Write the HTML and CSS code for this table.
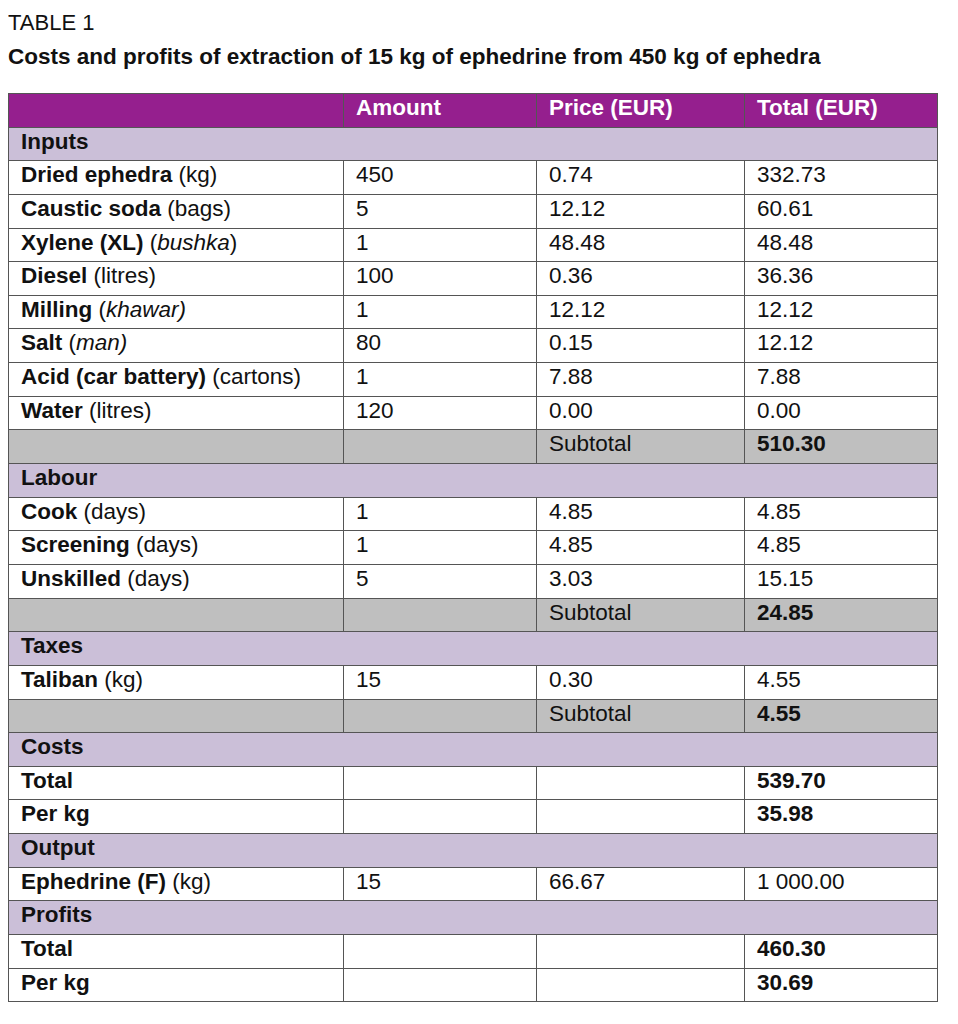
FILE: index.html
```html
<!DOCTYPE html>
<html lang="en">
<head>
<meta charset="utf-8">
<title>Table 1</title>
<link rel="stylesheet" href="styles.css">
</head>
<body>
<p class="label">TABLE 1</p>
<h1 class="title">Costs and profits of extraction of 15 kg of ephedrine from 450 kg of ephedra</h1>
<table class="data">
  <colgroup>
    <col class="c1"><col class="c2"><col class="c3"><col class="c4">
  </colgroup>
  <thead>
    <tr class="head"><th></th><th>Amount</th><th>Price (EUR)</th><th>Total (EUR)</th></tr>
  </thead>
  <tbody>
    <tr class="section"><td colspan="4">Inputs</td></tr>
    <tr><td><b>Dried ephedra</b> (kg)</td><td>450</td><td>0.74</td><td>332.73</td></tr>
    <tr><td><b>Caustic soda</b> (bags)</td><td>5</td><td>12.12</td><td>60.61</td></tr>
    <tr><td><b>Xylene (XL)</b> (<i>bushka</i>)</td><td>1</td><td>48.48</td><td>48.48</td></tr>
    <tr><td><b>Diesel</b> (litres)</td><td>100</td><td>0.36</td><td>36.36</td></tr>
    <tr><td><b>Milling</b> (<i>khawar)</i></td><td>1</td><td>12.12</td><td>12.12</td></tr>
    <tr><td><b>Salt</b> (<i>man)</i></td><td>80</td><td>0.15</td><td>12.12</td></tr>
    <tr><td><b>Acid (car battery)</b> (cartons)</td><td>1</td><td>7.88</td><td>7.88</td></tr>
    <tr><td><b>Water</b> (litres)</td><td>120</td><td>0.00</td><td>0.00</td></tr>
    <tr class="sub"><td></td><td></td><td>Subtotal</td><td><b>510.30</b></td></tr>
    <tr class="section"><td colspan="4">Labour</td></tr>
    <tr><td><b>Cook</b> (days)</td><td>1</td><td>4.85</td><td>4.85</td></tr>
    <tr><td><b>Screening</b> (days)</td><td>1</td><td>4.85</td><td>4.85</td></tr>
    <tr><td><b>Unskilled</b> (days)</td><td>5</td><td>3.03</td><td>15.15</td></tr>
    <tr class="sub"><td></td><td></td><td>Subtotal</td><td><b>24.85</b></td></tr>
    <tr class="section"><td colspan="4">Taxes</td></tr>
    <tr><td><b>Taliban</b> (kg)</td><td>15</td><td>0.30</td><td>4.55</td></tr>
    <tr class="sub"><td></td><td></td><td>Subtotal</td><td><b>4.55</b></td></tr>
    <tr class="section"><td colspan="4">Costs</td></tr>
    <tr><td><b>Total</b></td><td></td><td></td><td><b>539.70</b></td></tr>
    <tr><td><b>Per kg</b></td><td></td><td></td><td><b>35.98</b></td></tr>
    <tr class="section"><td colspan="4">Output</td></tr>
    <tr><td><b>Ephedrine (F)</b> (kg)</td><td>15</td><td>66.67</td><td>1 000.00</td></tr>
    <tr class="section"><td colspan="4">Profits</td></tr>
    <tr><td><b>Total</b></td><td></td><td></td><td><b>460.30</b></td></tr>
    <tr><td><b>Per kg</b></td><td></td><td></td><td><b>30.69</b></td></tr>
  </tbody>
</table>
</body>
</html>
```

FILE: styles.css
```css
html, body {
  background: #ffffff;
}
body {
  margin: 8px;
  font-family: "Liberation Sans", Arial, sans-serif;
  color: #111111;
}
.label {
  margin: 0;
  padding-top: 2px;
  font-size: 22px;
  line-height: 26px;
  font-weight: normal;
}
.title {
  margin: 8px 0 0 0;
  font-size: 22.5px;
  line-height: 26px;
  font-weight: bold;
}
.data {
  margin-top: 23px;
  width: 929px;
  table-layout: fixed;
  border-collapse: collapse;
  font-size: 22.5px;
  line-height: 26px;
}
.c1 { width: 335px; }
.c2 { width: 193px; }
.c3 { width: 208px; }
.c4 { width: 193px; }
.data th,
.data td {
  border: 1px solid #555555;
  height: 33.65px;
  box-sizing: border-box;
  padding: 1px 12px 0 12px;
  vertical-align: top;
  text-align: left;
  white-space: nowrap;
}
.data tr.head th {
  background: #951f8e;
  color: #ffffff;
  font-weight: bold;
}
.data tr.section td {
  background: #cbbfd8;
  font-weight: bold;
}
.data tr.sub td {
  background: #bfbfbf;
}
.data b {
  font-weight: bold;
}
```
